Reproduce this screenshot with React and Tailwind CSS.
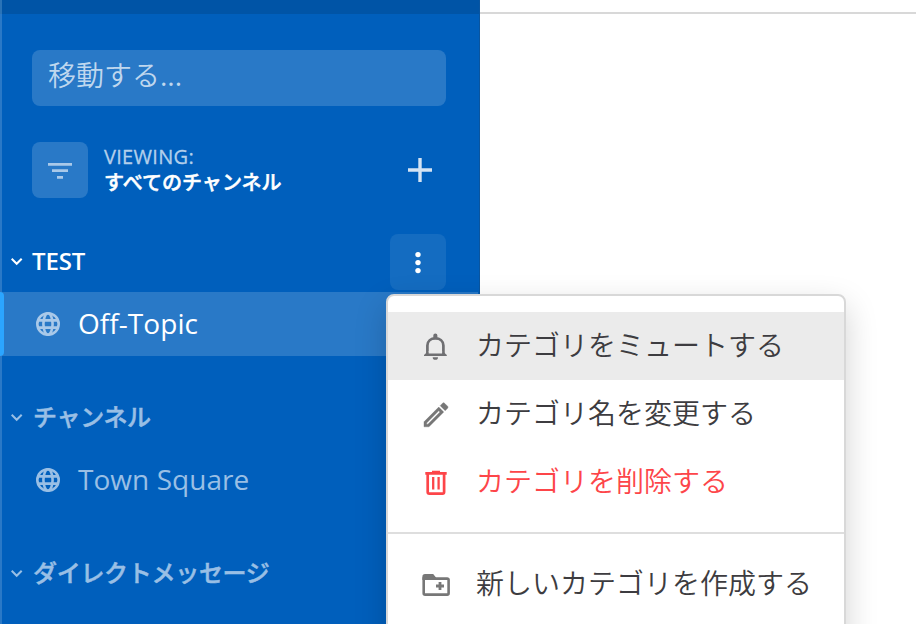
const Globe = () => (
  <svg className="h-6 w-6 shrink-0" viewBox="0 0 24 24" fill="none" stroke="currentColor" strokeWidth="2.6">
    <circle cx="12" cy="12" r="10.7" />
    <ellipse cx="12" cy="12" rx="4.6" ry="10.7" />
    <path d="M2 8.4H22M2 15.6H22" />
  </svg>
);

const Chevron = () => (
  <svg className="h-3 w-3 shrink-0" viewBox="0 0 12 12" fill="none" stroke="currentColor" strokeWidth="2">
    <path d="M0.7 3.8L5.7 8.8L10.7 3.8" />
  </svg>
);

const Bell = () => (
  <svg className="h-8 w-8 shrink-0" viewBox="0 0 32 32" fill="none" stroke="currentColor" strokeWidth="2.7">
    <path d="M7.4 24V15.6C7.4 11 11 8.3 15.4 8.3S23.4 11 23.4 15.6V24" />
    <path d="M4 26V24.9L7 22.2H23.8L26.8 24.9V26Z" fill="currentColor" stroke="none" />
    <path d="M8.7 21H22.1V23.4H8.7Z" fill="#ebebeb" stroke="none" />
    <path d="M13.3 8V5.6A2.05 2.05 0 0 1 17.4 5.6V8Z" fill="currentColor" stroke="none" />
    <path d="M12.7 27.2H18A2.65 2.65 0 0 1 12.7 27.2Z" fill="currentColor" stroke="none" />
  </svg>
);

const Pencil = () => (
  <svg className="h-8 w-8 shrink-0" viewBox="0 -0.6 24 24" fill="currentColor" stroke="currentColor" strokeWidth="0.3">
    <path d="M14.06,9L15,9.94L5.92,19H5V18.08L14.06,9M17.66,3C17.41,3 17.15,3.1 16.96,3.29L15.13,5.12L18.88,8.87L20.71,7.04C21.1,6.65 21.1,6 20.71,5.63L18.37,3.29C18.17,3.09 17.92,3 17.66,3M14.06,6.19L3,17.25V21H6.75L17.81,9.94L14.06,6.19Z" />
  </svg>
);

const Trash = () => (
  <svg className="h-8 w-8 shrink-0" viewBox="0 0 32 32" fill="none" stroke="currentColor" strokeWidth="2.7">
    <path d="M5.3 7.4H26.7" />
    <path d="M12 5.6H20" strokeWidth="1.8" />
    <path d="M7.7 8V26A1.6 1.6 0 0 0 9.3 27.6H22.5A1.6 1.6 0 0 0 24.1 26V8" />
    <path d="M13.2 11V23.4M18.6 11V23.4" strokeWidth="2.3" />
  </svg>
);

const FolderPlus = () => (
  <svg className="h-8 w-8 shrink-0" viewBox="0 0 32 32" fill="none" stroke="currentColor" strokeWidth="2.6">
    <path d="M3.7 10.6H27.2A1.4 1.4 0 0 1 28.6 12V25.2A1.4 1.4 0 0 1 27.2 26.6H5.1A1.4 1.4 0 0 1 3.7 25.2Z" />
    <path d="M2.4 12V8.6A2.6 2.6 0 0 1 5 6H13.2L16 9.4V12Z" fill="currentColor" stroke="none" />
    <path d="M16 18H24M20 14V22" strokeWidth="2.8" />
  </svg>
);

const Section = ({ title, active, action, children }) => (
  <section className="mb-7">
    <div className={`flex h-16 items-center gap-[9px] pt-0.5 pl-[9px] ${active ? "text-white" : "text-[#99bfe5]"}`}>
      <Chevron />
      <h2
        className={`text-2xl whitespace-nowrap ${
          active ? "font-semibold tracking-[-0.1px]" : "pl-px font-medium tracking-[-0.3px] [-webkit-text-stroke:0.5px_#99bfe5]"
        }`}
      >
        {title}
      </h2>
      {action}
    </div>
    {children}
  </section>
);

const MenuItem = ({ icon, label, className }) => (
  <li className={`flex h-[68px] items-center gap-6 pl-8 ${className}`}>
    {icon}
    <span className="pb-0.5 text-[28px] leading-none font-[350] whitespace-nowrap">{label}</span>
  </li>
);

export default function App() {
  return (
    <div className="relative flex h-[624px] w-[916px] overflow-hidden bg-white font-['Open_Sans','Noto_Sans_CJK_JP',sans-serif]">
      <aside className="flex w-[480px] shrink-0 flex-col border-r border-[#0a559f] bg-[#005fbc]">
        <div className="h-[14px] shrink-0 border-l-2 border-[#2a73b7] bg-[#0054a6]" />
        <div className="flex-1 border-l-2 border-[#2a79c7] pt-9">
          <div className="ml-[30px] flex h-14 w-[414px] items-center rounded-lg bg-[#2979c7] pb-1.5 pl-4 text-[28px] text-[#bfd7ee]">
            <span className="font-[350]">移動する</span>
            <span>...</span>
          </div>
          <div className="mt-9 ml-[30px] flex h-14 w-[414px] items-center">
            <div className="flex h-14 w-14 items-center justify-center rounded-lg bg-[#2979c7] text-[#a9c9e9]">
              <svg className="h-6 w-6" viewBox="0 0 24 24" fill="currentColor">
                <path d="M0 5H24V7.7H0ZM4 11.3H20V14H4ZM9 18H15V20.7H9Z" />
              </svg>
            </div>
            <div className="ml-4 flex flex-col text-xl whitespace-nowrap">
              <span className="h-[26px] leading-[26px] font-medium tracking-[0.3px] text-[#b3cfeb] [-webkit-text-stroke:0.3px_#b3cfeb]">VIEWING:</span>
              <span className="h-[26px] leading-[26px] font-medium tracking-[0.05px] text-white [-webkit-text-stroke:0.5px_#ffffff]">すべてのチャンネル</span>
            </div>
            <svg className="mr-[14px] ml-auto h-6 w-6 text-[#d4e3f3]" viewBox="0 0 24 24" fill="none" stroke="currentColor" strokeWidth="3.4">
              <path d="M0 12H24M12 0V24" />
            </svg>
          </div>
          <div className="mt-[30px]">
            <Section
              active
              title="TEST"
              action={
                <button className="mt-0.5 mr-[33px] ml-auto flex h-14 w-14 items-center justify-center rounded-lg bg-[#146cc1]">
                  <svg className="h-6 w-6" viewBox="0 0 24 24" fill="currentColor">
                    <circle cx="12" cy="4.6" r="2.7" />
                    <circle cx="12" cy="12.6" r="2.7" />
                    <circle cx="12" cy="20.6" r="2.7" />
                  </svg>
                </button>
              }
            >
              <div className="-ml-0.5 flex h-16 w-[478px] items-center bg-[#2979c7] text-[#a9c9e9]">
                <div className="mr-8 h-16 w-1 rounded-r bg-[#2ba5ff]" />
                <Globe />
                <span className="ml-[18px] pb-0.5 text-[28px] tracking-[0.05px] text-white">Off-Topic</span>
              </div>
            </Section>
            <Section title="チャンネル">
              <div className="flex h-16 items-center pl-[34px] text-[#99bfe5]">
                <Globe />
                <span className="ml-[18px] pb-0.5 text-[28px] tracking-[0.05px]">Town Square</span>
              </div>
            </Section>
            <Section title="ダイレクトメッセージ" />
          </div>
        </div>
      </aside>
      <main className="flex-1">
        <div className="h-[14px] border-b-2 border-[#d8d8d8]" />
      </main>
      <ul className="absolute top-[294px] left-[386px] h-[400px] w-[460px] overflow-hidden rounded-lg border-2 border-[#d8d8d8] bg-white pt-4 text-[#3d3c40] shadow-[0_12px_32px_rgba(0,0,0,0.18)]">
        <MenuItem icon={<span className="text-[#6f6f72]"><Bell /></span>} label="カテゴリをミュートする" className="bg-[#ebebeb]" />
        <MenuItem icon={<span className="text-[#777]"><Pencil /></span>} label="カテゴリ名を変更する" className="" />
        <MenuItem icon={<Trash />} label="カテゴリを削除する" className="text-[#fd4549]" />
        <li className="my-4 h-0.5 bg-[#dedede]" />
        <MenuItem icon={<span className="text-[#777]"><FolderPlus /></span>} label="新しいカテゴリを作成する" className="" />
      </ul>
    </div>
  );
}
